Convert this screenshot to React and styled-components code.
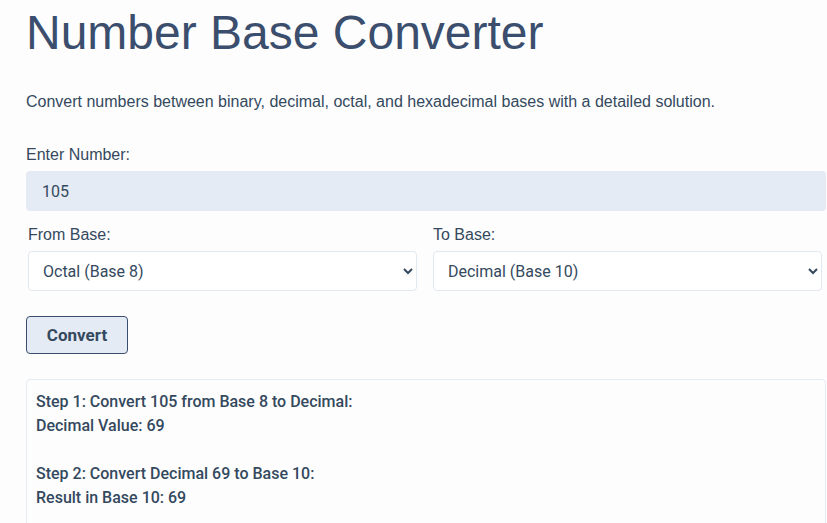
import React, { useState } from "react";
import styled, { createGlobalStyle } from "styled-components";

const Global = createGlobalStyle`
  html, body { margin: 0; padding: 0; background: #fdfdfd; }
  body { font-family: "Liberation Sans", Arial, sans-serif; color: #34495e; overflow: hidden; }
  * { box-sizing: border-box; }
`;

const Page = styled.div`
  width: 800px;
  margin-left: 26px;
`;

const Title = styled.h1`
  margin: 5px 0 0;
  font-size: 48px;
  font-weight: 400;
  color: #3b4e6e;
`;

const Subtitle = styled.p`
  margin: 33px 0 0;
  font-size: 16px;
  color: #34495e;
`;

const Label = styled.label`
  display: block;
  font-size: 16px;
  color: #34495e;
  margin-bottom: 7px;
`;

const Field = styled.div`
  margin-top: ${(p) => p.$top || 0}px;
`;

const NumberInput = styled.input`
  display: block;
  width: 100%;
  height: 40px;
  border: none;
  border-radius: 4px;
  background: #e4ebf5;
  padding: 0 16px;
  font-family: Roboto, sans-serif;
  font-size: 16px;
  color: #34495e;
  outline: none;
`;

const SelectRow = styled.div`
  display: grid;
  grid-template-columns: 389px 389px;
  column-gap: 16px;
  padding-left: 2px;
  margin-top: 15px;
`;

const Select = styled.select`
  display: block;
  width: 100%;
  height: 40px;
  border: 1px solid #e2e8f0;
  border-radius: 4px;
  background: #fff;
  padding: 0 10px;
  font-family: Roboto, sans-serif;
  font-size: 16px;
  color: #34495e;
  outline: none;
`;

const Button = styled.button`
  display: block;
  margin-top: 25px;
  width: 102px;
  height: 38px;
  border: 1px solid #3b4e6e;
  border-radius: 4px;
  background: #e4ebf5;
  font-family: Roboto, sans-serif;
  font-weight: 700;
  font-size: 17px;
  color: #34495e;
`;

const Result = styled.div`
  margin-top: 25px;
  border: 1px solid #e4ebf5;
  border-radius: 4px;
  padding: 10px 9px 20px;
  font-family: Roboto, sans-serif;
  font-weight: 500;
  font-size: 16px;
  line-height: 24px;
  color: #34495e;
  min-height: 160px;
`;

const Line = styled.div`
  min-height: 24px;
`;

export default function App() {
  const [value, setValue] = useState("105");
  const lines = [
    "Step 1: Convert 105 from Base 8 to Decimal:",
    "Decimal Value: 69",
    "",
    "Step 2: Convert Decimal 69 to Base 10:",
    "Result in Base 10: 69",
  ];
  return (
    <>
      <Global />
      <Page>
        <Title>Number Base Converter</Title>
        <Subtitle>
          Convert numbers between binary, decimal, octal, and hexadecimal bases with a detailed solution.
        </Subtitle>
        <Field $top={35}>
          <Label>Enter Number:</Label>
          <NumberInput value={value} onChange={(e) => setValue(e.target.value)} />
        </Field>
        <SelectRow>
          <div>
            <Label>From Base:</Label>
            <Select defaultValue="8">
              <option value="2">Binary (Base 2)</option>
              <option value="8">Octal (Base 8)</option>
              <option value="10">Decimal (Base 10)</option>
              <option value="16">Hexadecimal (Base 16)</option>
            </Select>
          </div>
          <div>
            <Label>To Base:</Label>
            <Select defaultValue="10">
              <option value="2">Binary (Base 2)</option>
              <option value="8">Octal (Base 8)</option>
              <option value="10">Decimal (Base 10)</option>
              <option value="16">Hexadecimal (Base 16)</option>
            </Select>
          </div>
        </SelectRow>
        <Button>Convert</Button>
        <Result>
          {lines.map((l, i) => (
            <Line key={i}>{l}</Line>
          ))}
        </Result>
      </Page>
    </>
  );
}
